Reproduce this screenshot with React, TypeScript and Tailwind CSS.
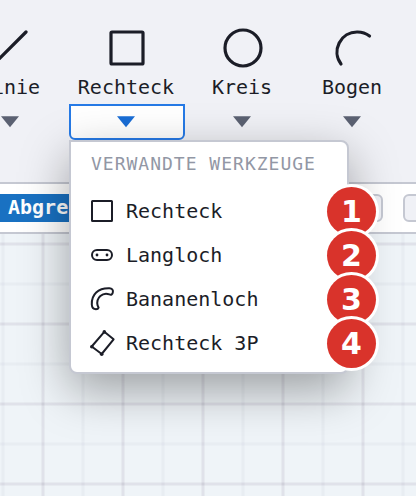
import type { ReactNode } from "react";

function Arrow({ className }: { className: string }) {
  return (
    <svg viewBox="0 0 20 12" className={`h-3 w-5 fill-current ${className}`} aria-hidden="true">
      <path d="M0 0.3H18L9 11.3Z" />
    </svg>
  );
}

function ToolIcon({ children }: { children: ReactNode }) {
  return (
    <svg
      viewBox="0 0 48 48"
      className="size-12 overflow-visible"
      fill="none"
      stroke="currentColor"
      strokeWidth="3.2"
      strokeLinecap="round"
      strokeLinejoin="round"
      aria-hidden="true"
    >
      {children}
    </svg>
  );
}

function Tool({ label, icon, open, children }: { label: string; icon: ReactNode; open?: boolean; children?: ReactNode }) {
  return (
    <div className={`relative flex shrink-0 flex-col items-center ${open ? "w-29" : "w-26"}`}>
      <button type="button" className="flex flex-col items-center">
        <ToolIcon>{icon}</ToolIcon>
        <span className="pr-0.5 text-[20px] leading-[30px]">{label}</span>
      </button>
      <button
        type="button"
        aria-label={`${label} Menü`}
        aria-expanded={!!open}
        className={`mt-0.5 flex h-9 w-full items-center justify-center rounded-b-md border-2 ${
          open ? "border-[#267ae6] bg-white" : "border-transparent"
        }`}
      >
        <Arrow className={open ? "text-[#196dd6]" : "text-[#5b6172]"} />
      </button>
      {children}
    </div>
  );
}

function MenuItem({ label, badge, children }: { label: string; badge: number; children: ReactNode }) {
  return (
    <li className="relative">
      <button type="button" className="flex h-11 w-full items-center gap-3 px-[19px] text-left text-[20px]">
        <svg
          viewBox="0 0 24 24"
          className="size-6 shrink-0 overflow-visible"
          fill="none"
          stroke="currentColor"
          strokeWidth="2"
          strokeLinejoin="round"
          aria-hidden="true"
        >
          {children}
        </svg>
        {label}
      </button>
      <span className="absolute -top-0.5 -right-[29px] flex size-[49px] items-center justify-center rounded-full bg-[#d9332b] font-['DejaVu_Sans',sans-serif] text-[30px] font-bold text-white ring-3 ring-white">
        {badge}
      </span>
    </li>
  );
}

function RelatedMenu() {
  return (
    <div className="absolute top-full left-0 z-10 w-70 rounded-lg rounded-tl-none border-2 border-[#c5c8d2] bg-white py-[7px] shadow-[0_16px_48px_rgba(0,0,0,0.35)]">
      <h2 className="mb-2.5 px-5 text-[18px] leading-[30px] tracking-[1px] whitespace-nowrap text-[#9297a5]">
        VERWANDTE WERKZEUGE
      </h2>
      <ul>
        <MenuItem label="Rechteck" badge={1}>
          <rect x="2" y="2" width="20" height="20" rx="0.5" />
        </MenuItem>
        <MenuItem label="Langloch" badge={2}>
          <rect x="2" y="7" width="20" height="10" rx="5" />
          <circle cx="7" cy="12" r="1.4" fill="currentColor" stroke="none" />
          <circle cx="17" cy="12" r="1.4" fill="currentColor" stroke="none" />
        </MenuItem>
        <MenuItem label="Bananenloch" badge={3}>
          <path d="M1.8 17.5C1.4 7.5 8 0.9 19.5 1.3C22 1.4 23.2 2.8 22.9 4.8C22.6 7.4 21.2 8.2 19.4 7.4C12.8 4.8 5.8 10.8 7.6 18.4L8.6 20.6C8.2 21.8 6.6 22.3 5 22.1C2.8 21.8 2 20.5 1.8 17.5Z" />
        </MenuItem>
        <MenuItem label="Rechteck 3P" badge={4}>
          <path d="M14.3 0.8L23.6 8.3L11.7 23L1.7 15.5Z" />
          <circle cx="14.3" cy="0.9" r="1.8" fill="currentColor" stroke="none" />
          <circle cx="1.8" cy="15.7" r="1.8" fill="currentColor" stroke="none" />
          <circle cx="11.7" cy="23.3" r="1.8" fill="currentColor" stroke="none" />
        </MenuItem>
      </ul>
    </div>
  );
}

function GridPaper() {
  return (
    <svg className="h-full w-full" aria-hidden="true">
      <defs>
        <pattern id="grid" width="80" height="80" patternUnits="userSpaceOnUse">
          <g fill="#6b7280" fillOpacity="0.028">
            <rect x="1" width="4" height="80" />
            <rect x="2" width="2" height="80" />
            <rect y="48" width="80" height="4" />
            <rect y="49" width="80" height="2" />
          </g>
          <g fill="#5a5064" fillOpacity="0.055">
            <rect x="41" width="4" height="80" />
            <rect x="42" width="2" height="80" />
            <rect y="8" width="80" height="4" />
            <rect y="9" width="80" height="2" />
          </g>
        </pattern>
      </defs>
      <rect width="100%" height="100%" fill="url(#grid)" />
    </svg>
  );
}

export default function App() {
  return (
    <div className="flex h-screen flex-col overflow-hidden bg-[#eff4f8] font-['DejaVu_Sans_Mono',monospace] text-[#1b1d27]">
      <header className="relative z-10 shrink-0 border-b-2 border-[#c5c8d2] bg-[#f0f1f6] pt-6 pb-[42px]">
        <nav className="-ml-[41px] flex gap-1.5">
          <Tool label="Linie" icon={<path d="M7 40L39 8" />} />
          <Tool label="Rechteck" open icon={<rect x="8" y="8" width="32" height="32" rx="1" />}>
            <RelatedMenu />
          </Tool>
          <Tool label="Kreis" icon={<circle cx="24" cy="24" r="18" />} />
          <Tool label="Bogen" icon={<path d="M12 40A20 20 0 0 1 28.3 8A20 20 0 0 1 40.5 12" />} />
        </nav>
      </header>
      <div className="flex shrink-0 items-center justify-between border-b-2 border-[#c5c8d2] bg-white py-2.5">
        <strong className="h-7 bg-[#1971c2] px-2 text-[20px] leading-[26px] text-white">Abgre</strong>
        <div className="-mr-[15px] flex gap-5">
          <button type="button" aria-label="Option 1" className="size-7 rounded-md border-2 border-[#c5c8d2] bg-[#f0f1f6]" />
          <button type="button" aria-label="Option 2" className="size-7 rounded-md border-2 border-[#c5c8d2] bg-[#f0f1f6]" />
        </div>
      </div>
      <main className="min-h-0 grow">
        <GridPaper />
      </main>
    </div>
  );
}
